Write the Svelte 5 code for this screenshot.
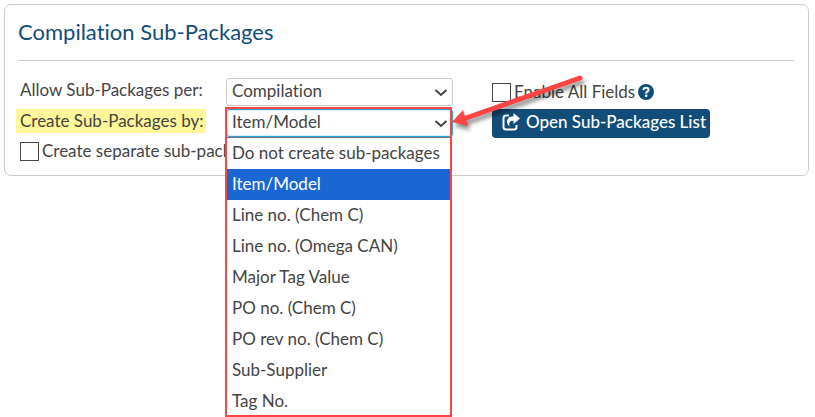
<script>
  const scopes = ["Compilation", "Item"];
  const groupings = [
    "Do not create sub-packages",
    "Item/Model",
    "Line no. (Chem C)",
    "Line no. (Omega CAN)",
    "Major Tag Value",
    "PO no. (Chem C)",
    "PO rev no. (Chem C)",
    "Sub-Supplier",
    "Tag No.",
  ];

  let scope = $state("Compilation");
  let grouping = $state("Item/Model");
  let separate = $state(false);
  let allFields = $state(false);
</script>

<main class="page">
  <section class="panel">
    <h2 class="panel__title">Compilation Sub-Packages</h2>

    <div class="panel__body">
      <div class="fields">
        <div class="field">
          <label class="field__label" for="scope">Allow Sub-Packages per:</label>
          <div class="field__control">
            <select id="scope" class="select" bind:value={scope}>
              {#each scopes as item}
                <option>{item}</option>
              {/each}
            </select>
            <svg class="chevron" viewBox="0 0 14 8"><path d="M1.500 1l5.500 5 5.500-5" /></svg>
          </div>
        </div>

        <div class="field">
          <label class="field__label" for="grouping"><mark>Create Sub-Packages by:</mark></label>
          <div class="field__control">
            <select id="grouping" class="select select--open" bind:value={grouping}>
              {#each groupings as item}
                <option>{item}</option>
              {/each}
            </select>
            <svg class="chevron" viewBox="0 0 14 8"><path d="M1.500 1l5.500 5 5.500-5" /></svg>

            <div class="menu" role="listbox" aria-label="Create Sub-Packages by">
              {#each groupings as item}
                <button
                  class="menu__item"
                  class:menu__item--active={item === grouping}
                  role="option"
                  aria-selected={item === grouping}
                  onclick={() => (grouping = item)}>{item}</button>
              {/each}
            </div>
            <div class="outline"></div>
            <svg class="arrow" viewBox="0 0 140 64">
              <path class="arrow__line" d="M128 10L14 50" />
              <path class="arrow__head" d="M0 54L11 42L16 58Z" />
            </svg>
          </div>
        </div>

        <label class="check">
          <input type="checkbox" bind:checked={separate} />
          Create separate sub-pack
        </label>
      </div>

      <div class="actions">
        <div class="actions__row">
          <label class="check">
            <input type="checkbox" bind:checked={allFields} />
            Enable All Fields
          </label>
          <svg class="help" viewBox="0 0 16 16">
            <circle cx="8" cy="8" r="8" />
            <path d="M5.4 6.1C5.5 4.6 6.5 3.8 8 3.8c1.5 0 2.6.8 2.6 2.1C10.6 7.5 8.2 7.4 8.2 9.4" />
            <rect x="7" y="10.6" width="2.3" height="2.3" />
          </svg>
        </div>
        <button class="btn">
          <svg class="btn__icon" viewBox="0 0 18 18">
            <path class="btn__frame" d="M7 2.500H4Q1.500 2.500 1.500 5v9q0 2.500 2.500 2.500h8q2.500 0 2.500-2.500v-2" />
            <path class="btn__share" d="M11.500 0L18 5.500l-6.500 5.500V7.800C8 7.700 6.500 9.300 7.500 13.500C3 9.500 4.500 3.300 11.500 3.200Z" />
          </svg>
          Open Sub-Packages List
        </button>
      </div>
    </div>
  </section>
</main>

<style>
  :global(body) {
    background: #fff;
  }

  .page {
    box-sizing: border-box;
    min-height: 100vh;
    padding: 4px 6px 0 4px;
    color: #444;
    font: 17px/22px Lato, "Open Sans", sans-serif;
    font-variant-ligatures: none;
  }

  .panel {
    padding: 0 14px 13px 13px;
    border: 1px solid #ccc;
    border-radius: 7px;
  }

  .panel__title {
    margin: 0 0 17px;
    padding: 13px 0 14px;
    border-bottom: 1px solid #ccc;
    color: #124d79;
    font-size: 22px;
    font-weight: 400;
    line-height: 28px;
  }

  .panel__body {
    display: flex;
    gap: 38px;
  }

  .fields {
    display: flex;
    flex-direction: column;
    gap: 3px;
    width: 435px;
  }

  .field {
    display: flex;
    align-items: flex-start;
  }

  .field__label {
    width: 208px;
    padding-left: 2px;
    box-sizing: border-box;
    line-height: 24px;
    white-space: nowrap;
  }

  mark {
    display: inline-block;
    margin-left: -4px;
    padding: 0 2px 0 4px;
    background: #fff799;
    color: inherit;
  }

  .field__control {
    position: relative;
    flex: 1;
  }

  .select {
    display: block;
    width: 100%;
    height: 28px;
    padding: 0 24px 3px 5px;
    border: 1px solid #ccc;
    border-radius: 3px;
    appearance: none;
    background: #fff;
    color: inherit;
    font: inherit;
    font-variant-ligatures: none;
  }

  .select--open {
    border: 1px solid #2f9fd0;
    box-shadow: inset 0 0 2px #66c5ec;
  }

  .chevron {
    position: absolute;
    top: 11px;
    right: 5px;
    width: 14px;
    height: 8px;
    fill: none;
    stroke: #444;
    stroke-width: 2;
    pointer-events: none;
  }

  .menu {
    position: absolute;
    top: 100%;
    left: 0;
    right: 2px;
    z-index: 1;
    box-sizing: border-box;
    border-top: 1px solid #777;
    background: #fff;
  }

  .menu__item {
    display: block;
    width: 100%;
    height: 31px;
    padding: 0 6px 2px;
    border: 0;
    background: #fff;
    color: inherit;
    font: inherit;
    text-align: left;
    white-space: nowrap;
  }

  .menu__item--active {
    background: #1967d2;
    color: #fff;
  }

  .outline {
    position: absolute;
    top: -2px;
    left: -1px;
    right: 1px;
    z-index: 2;
    height: 306px;
    border: 2px solid #f44;
    pointer-events: none;
  }

  .arrow {
    position: absolute;
    top: -41px;
    left: 226px;
    z-index: 3;
    width: 140px;
    height: 64px;
    overflow: visible;
    filter: drop-shadow(2px 4px 2px rgba(0, 0, 0, 0.45));
    pointer-events: none;
  }

  .arrow__line {
    stroke: #f44;
    stroke-width: 5;
    stroke-linecap: round;
  }

  .arrow__head {
    fill: #f44;
  }

  .check {
    display: flex;
    align-items: center;
    gap: 3px;
    padding-left: 2px;
    white-space: nowrap;
  }

  .check input {
    flex: none;
    width: 19px;
    height: 19px;
    margin: 0;
    border: 1px solid #444;
    appearance: none;
    background: #fff;
  }

  .check input:checked {
    background: #124d79;
  }

  .actions {
    display: flex;
    flex-direction: column;
    align-items: flex-start;
    gap: 6px;
    padding: 3px 0 0 1px;
  }

  .actions__row {
    display: flex;
    align-items: center;
    gap: 3px;
  }

  .actions .check {
    padding-left: 0;
  }

  .help {
    width: 16px;
    height: 16px;
    fill: #124d79;
  }

  .help path {
    fill: none;
    stroke: #fff;
    stroke-width: 2;
  }

  .help rect {
    fill: #fff;
  }

  .btn {
    display: flex;
    align-items: center;
    gap: 6px;
    height: 29px;
    padding: 0 4px 4px 10px;
    border: 0;
    border-radius: 4px;
    background: #124d79;
    color: #fff;
    font: 500 17px/22px Lato, "Open Sans", sans-serif;
    white-space: nowrap;
  }

  .btn__icon {
    width: 18px;
    height: 18px;
  }

  .btn__frame {
    fill: none;
    stroke: #fff;
    stroke-width: 2;
  }

  .btn__share {
    fill: #fff;
  }
</style>
